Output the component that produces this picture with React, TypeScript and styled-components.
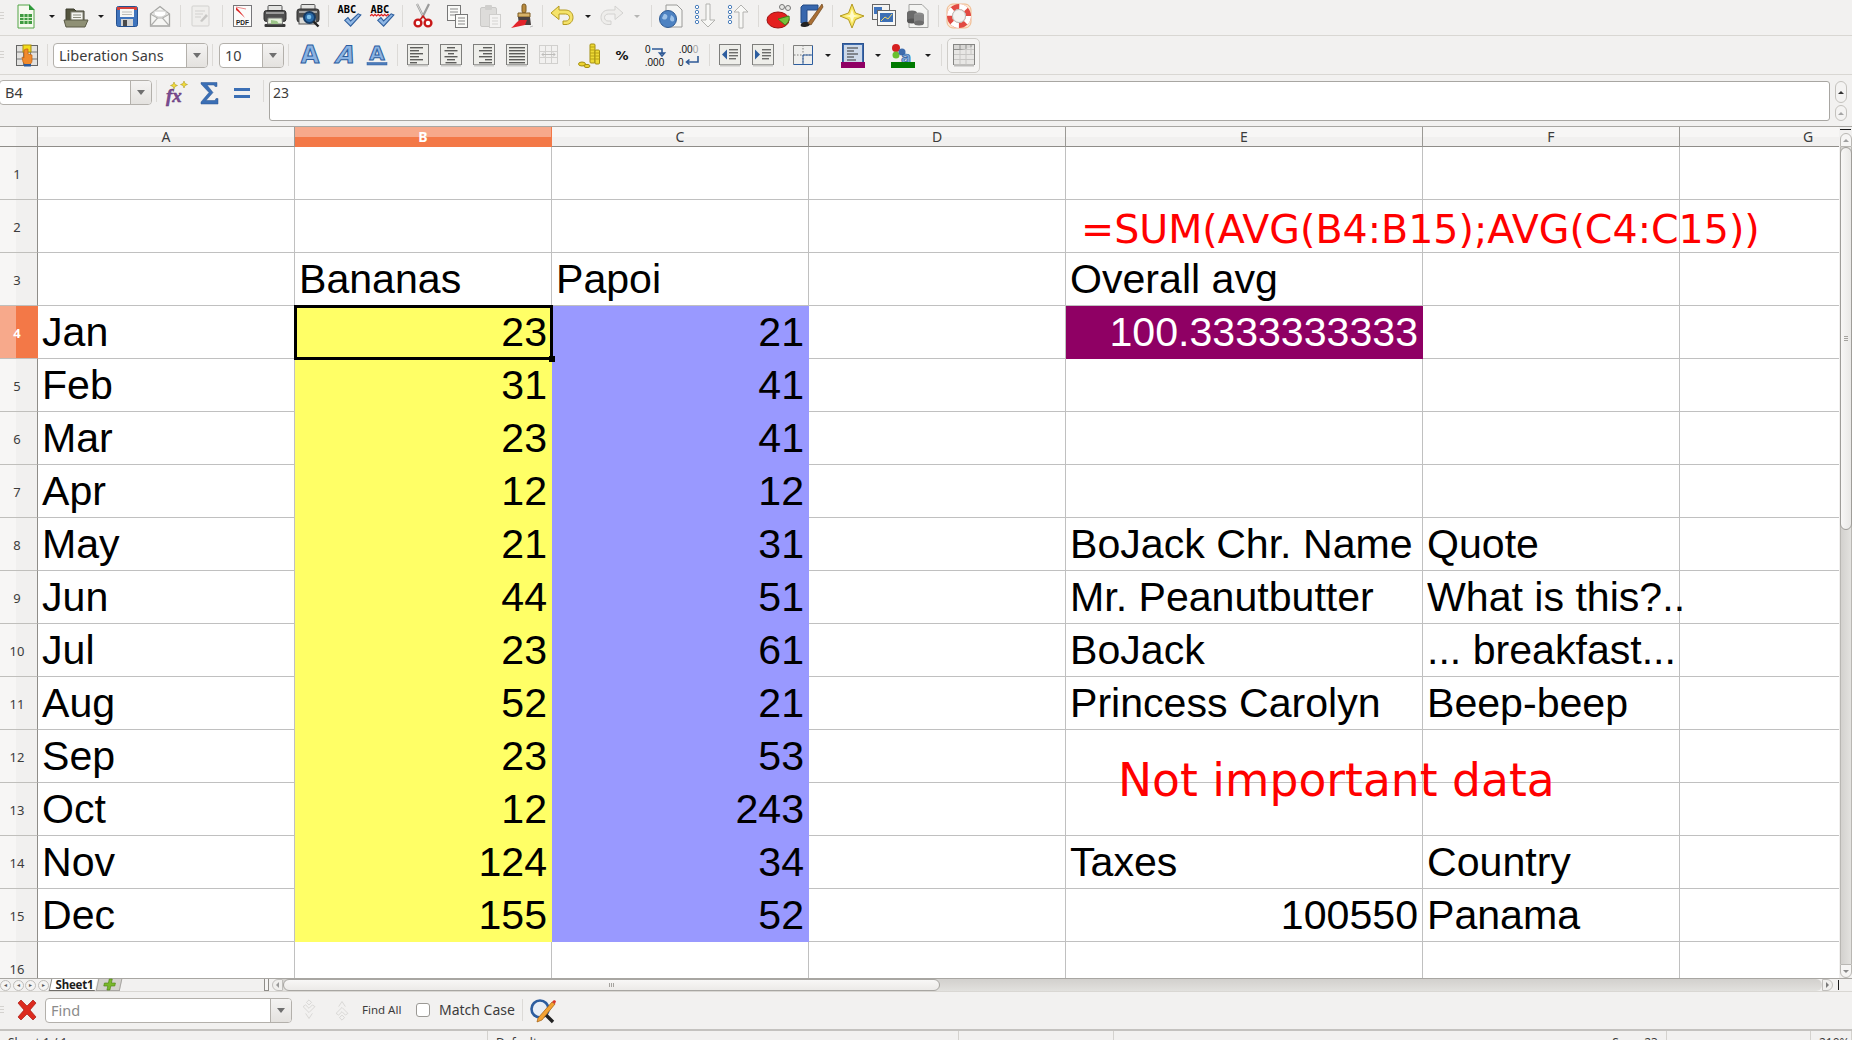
import React from "react";
import styled, { createGlobalStyle } from "styled-components";

const UI_FONT = `"Noto Sans", "Open Sans", sans-serif`;

const Global = createGlobalStyle`
  html, body { margin: 0; padding: 0; height: 100%; overflow: hidden; background: #f2f1f0; }
  #root { height: 100%; }
`;

const Page = styled.div`
  height: 100vh;
  display: flex;
  flex-direction: column;
  overflow: hidden;
  background: #f2f1f0;
  font-family: ${UI_FONT};
  color: #3c3c3c;
`;

const Toolbar = styled.div<{ $h: number; $pb?: number }>`
  flex: none;
  box-sizing: border-box;
  height: ${(p) => p.$h}px;
  padding-bottom: ${(p) => p.$pb ?? 0}px;
  display: flex;
  align-items: center;
  border-bottom: 1px solid #d9d7d3;
`;

const Grip = styled.div`
  flex: none;
  width: 11px;
  height: 8px;
  box-sizing: border-box;
  padding-right: 7px;
  background: repeating-linear-gradient(180deg, #d4d2cf 0 1px, transparent 1px 3px);
  background-clip: content-box;
`;

const Tool = styled.div<{ $w: number; $active?: boolean }>`
  flex: none;
  width: ${(p) => p.$w}px;
  display: flex;
  align-items: center;
  justify-content: center;
  ${(p) =>
    p.$active &&
    `height: 35px; box-sizing: border-box; margin-left: 2px;
     border: 1px solid #cfcdc9; border-radius: 5px; background: #f5f4f3;`}
`;

const Sep = styled.div<{ $w?: number; $h?: number }>`
  flex: none;
  width: ${(p) => p.$w ?? 8}px;
  height: ${(p) => p.$h ?? 22}px;
  background: linear-gradient(#dcdad7, #dcdad7) center / 1px 100% no-repeat;
`;

const Drop = styled.div<{ $w: number; $off?: boolean }>`
  flex: none;
  width: ${(p) => p.$w}px;
  display: flex;
  justify-content: center;
  &::after {
    content: "";
    border-style: solid;
    border-width: 3px 3px 0;
    border-color: ${(p) => (p.$off ? "#b5b5b3" : "#1c1c1c")} transparent transparent;
  }
`;

const Combo = styled.div<{ $w: number; $h?: number; $ml?: number }>`
  flex: none;
  box-sizing: border-box;
  width: ${(p) => p.$w}px;
  height: ${(p) => p.$h ?? 25}px;
  margin-left: ${(p) => p.$ml ?? 0}px;
  display: flex;
  background: #fff;
  border: 1px solid #b3b0ab;
  border-radius: 4px;
  overflow: hidden;
  font-size: 14.5px;
`;

const ComboText = styled.div<{ $muted?: boolean }>`
  flex: 1;
  padding-left: 5px;
  line-height: 23px;
  white-space: nowrap;
  overflow: hidden;
  color: ${(p) => (p.$muted ? "#8b8b8b" : "#3c3c3c")};
`;

const ComboButton = styled.div`
  flex: none;
  width: 20px;
  display: flex;
  align-items: center;
  justify-content: center;
  border-left: 1px solid #b3b0ab;
  background: linear-gradient(#f4f3f2, #e4e2df);
  &::after {
    content: "";
    border-style: solid;
    border-width: 5px 4px 0;
    border-color: #6f6f6f transparent transparent;
  }
`;

const FormulaBar = styled.div`
  flex: none;
  box-sizing: border-box;
  height: 52px;
  padding-top: 5px;
  display: flex;
  align-items: flex-start;
  border-bottom: 1px solid #a8a6a2;
`;

const FormulaTool = styled(Tool)`
  height: 25px;
`;

const FormulaInput = styled.div`
  flex: none;
  box-sizing: border-box;
  width: 1561px;
  height: 40px;
  margin-top: 1px;
  padding: 0 3px;
  background: #fff;
  border: 1px solid #a8a6a2;
  border-radius: 3px;
  font-size: 14px;
  line-height: 22px;
`;

const SpinColumn = styled.div`
  flex: none;
  margin: 1px 0 0 5px;
  display: flex;
  flex-direction: column;
  gap: 2px;
`;

const SpinButton = styled.div<{ $h: number; $off?: boolean }>`
  box-sizing: border-box;
  width: 12px;
  height: ${(p) => p.$h}px;
  display: flex;
  align-items: center;
  justify-content: center;
  border: 1px solid #c4c2be;
  border-radius: 6px;
  background: #f4f3f2;
  &::after {
    content: "";
    border-style: solid;
    border-width: 0 3px 3px;
    border-color: transparent transparent ${(p) => (p.$off ? "#a5a5a5" : "#333")};
  }
`;

const SheetArea = styled.div`
  flex: none;
  height: 851px;
  display: flex;
`;

const Sheet = styled.div`
  position: relative;
  flex: none;
  width: 1839px;
  height: 851px;
  overflow: hidden;
  background: #fff;
  display: grid;
  grid-template-columns: 38px 257px 257px 257px 257px 357px 257px 257px;
  grid-template-rows: 20px;
  grid-auto-rows: 53px;
  font-family: "Liberation Sans", Arial, sans-serif;
  font-size: 41.1px;
  color: #000;
`;

const Corner = styled.div`
  box-sizing: border-box;
  background: linear-gradient(90deg, #f7f6f5 16px, #f1f0ef 16px);
  border-right: 1px solid #8f8d89;
  border-bottom: 1px solid #8f8d89;
`;

const ColHead = styled.div<{ $on?: boolean }>`
  box-sizing: border-box;
  display: flex;
  align-items: center;
  justify-content: center;
  font-family: ${UI_FONT};
  font-size: 14px;
  color: ${(p) => (p.$on ? "#fff" : "#3c3c3c")};
  font-weight: ${(p) => (p.$on ? 700 : 400)};
  background: ${(p) =>
    p.$on
      ? "linear-gradient(#f7a98b 10px, #f37847 10px)"
      : "linear-gradient(#f7f6f5 10px, #f1f0ef 10px)"};
  border-right: 1px solid ${(p) => (p.$on ? "#f37847" : "#9b9995")};
  border-bottom: 1px solid ${(p) => (p.$on ? "#f37847" : "#8f8d89")};
`;

const RowHead = styled.div<{ $on?: boolean }>`
  box-sizing: border-box;
  display: flex;
  align-items: center;
  justify-content: center;
  padding: 2px 3px 0 0;
  font-family: ${UI_FONT};
  font-size: 13px;
  color: ${(p) => (p.$on ? "#fff" : "#3c3c3c")};
  font-weight: ${(p) => (p.$on ? 700 : 400)};
  background: ${(p) =>
    p.$on
      ? "linear-gradient(90deg, #f7a98b 16px, #f37847 16px)"
      : "linear-gradient(90deg, #f7f6f5 16px, #f1f0ef 16px)"};
  border-right: 1px solid ${(p) => (p.$on ? "#f37847" : "#8f8d89")};
  border-bottom: 1px solid #c0bfbc;
`;

const Cell = styled.div<{ $bg?: string; $num?: boolean; $fg?: string; $sel?: boolean }>`
  position: relative;
  box-sizing: border-box;
  min-width: 0;
  padding: 0 4px;
  line-height: 53px;
  white-space: nowrap;
  text-align: ${(p) => (p.$num ? "right" : "left")};
  color: ${(p) => p.$fg ?? "#000"};
  background: ${(p) => p.$bg ?? "transparent"};
  border-right: 1px solid ${(p) => p.$bg ?? "#c0c0c0"};
  border-bottom: 1px solid ${(p) => p.$bg ?? "#c0c0c0"};
  ${(p) =>
    p.$sel &&
    `
    &::before {
      content: "";
      position: absolute;
      inset: -1px -2px -2px -1px;
      border: 3px solid #000;
      z-index: 2;
    }
    &::after {
      content: "";
      position: absolute;
      right: -4px;
      bottom: -4px;
      width: 6px;
      height: 6px;
      background: #000;
      z-index: 3;
    }
  `}
`;

const FloatText = styled.div<{ $x: number; $y: number; $size: number }>`
  position: absolute;
  left: ${(p) => p.$x}px;
  top: ${(p) => p.$y}px;
  font-family: "DejaVu Sans", sans-serif;
  font-size: ${(p) => p.$size}px;
  line-height: 1;
  color: #ff0000;
  white-space: nowrap;
  z-index: 4;
`;

const VScroll = styled.div`
  flex: none;
  width: 13px;
  display: flex;
  flex-direction: column;
  align-items: center;
  background: #f2f1f0;
`;

const ScrollMark = styled.div`
  flex: none;
  width: 11px;
  height: 1px;
  margin: 2px 0 3px;
  background: #1c1c1c;
`;

const VButton = styled.div<{ $down?: boolean }>`
  flex: none;
  box-sizing: border-box;
  width: 12px;
  height: 14px;
  display: flex;
  align-items: center;
  justify-content: center;
  background: #f6f5f4;
  border: 1px solid #b9b7b3;
  border-radius: ${(p) => (p.$down ? "0 0 6px 6px" : "6px 6px 0 0")};
  &::after {
    content: "";
    border-style: solid;
    border-width: ${(p) => (p.$down ? "3px 3px 0" : "0 3px 3px")};
    border-color: ${(p) =>
      p.$down ? "#8a8a8a transparent transparent" : "transparent transparent #a0a0a0"};
  }
`;

const VTrack = styled.div`
  flex: 1;
  box-sizing: border-box;
  width: 12px;
  display: flex;
  flex-direction: column;
  background: linear-gradient(90deg, #d3d1ce, #e3e2df);
  border: 1px solid #b9b7b3;
  border-width: 0 1px;
`;

const VThumb = styled.div`
  flex: none;
  height: 383px;
  margin: 0 -1px;
  box-sizing: border-box;
  display: flex;
  align-items: center;
  justify-content: center;
  background: linear-gradient(90deg, #f8f7f6, #e9e8e6);
  border: 1px solid #9f9d99;
  border-radius: 6px;
  &::after {
    content: "";
    width: 4px;
    height: 5px;
    background: repeating-linear-gradient(180deg, #a5a39f 0 1px, transparent 1px 2px);
  }
`;

const TabBar = styled.div`
  flex: none;
  box-sizing: border-box;
  height: 14px;
  display: flex;
  align-items: stretch;
  border-top: 1px solid #a8a6a2;
  border-bottom: 1px solid #d9d7d3;
`;

const TabNav = styled.div`
  flex: none;
  width: 50px;
  display: flex;
  gap: 1.5px;
  align-items: center;
`;

const TabNavButton = styled.div`
  flex: none;
  box-sizing: border-box;
  width: 11px;
  height: 11px;
  border: 1px solid #c0bebb;
  border-radius: 50%;
  background: #f5f4f3;
  display: flex;
  align-items: center;
  justify-content: center;
  font-size: 6px;
  line-height: 1;
  color: #5a5a5a;
`;

const SheetTab = styled.div`
  flex: none;
  width: 46px;
  box-sizing: border-box;
  background: #fff;
  font-size: 11.5px;
  font-weight: 700;
  line-height: 12px;
  text-align: center;
  letter-spacing: -0.2px;
  color: #1c1c1c;
  border-left: 1px solid #8f8d89;
  border-bottom: 1px solid #6f6d69;
  transform: skewX(-12deg);
  & > span {
    display: block;
    padding-left: 2px;
    transform: skewX(12deg);
  }
`;

const AddTab = styled.div`
  flex: none;
  width: 22px;
  margin-left: 1px;
  display: flex;
  align-items: center;
  justify-content: center;
  background: #d4d2ce;
  border: 1px solid #a8a6a2;
  border-width: 0 1px 1px;
  transform: skewX(-12deg);
`;

const TabFill = styled.div`
  flex: none;
  width: 143px;
`;

const SplitHandle = styled.div`
  flex: none;
  width: 5px;
  box-sizing: border-box;
  background: #f6f5f4;
  border: 1px solid #8f8d89;
  border-width: 0 1px 1px;
`;

const HScroll = styled.div`
  flex: none;
  width: 1567px;
  margin-left: 3px;
  display: flex;
  align-items: stretch;
`;

const HEnd = styled.div<{ $right?: boolean }>`
  flex: none;
  box-sizing: border-box;
  width: 11px;
  display: flex;
  align-items: center;
  justify-content: center;
  background: #f0efed;
  border: 1px solid #c0bebb;
  border-radius: ${(p) => (p.$right ? "0 6px 6px 0" : "6px 0 0 6px")};
  &::after {
    content: "";
    border-style: solid;
    border-width: ${(p) => (p.$right ? "3px 0 3px 3px" : "3px 3px 3px 0")};
    border-color: ${(p) =>
      p.$right
        ? "transparent transparent transparent #7a7a7a"
        : "transparent #9a9a9a transparent transparent"};
  }
`;

const HTrack = styled.div`
  flex: 1;
  display: flex;
  background: linear-gradient(#d2d0cd, #e2e1de);
  border-radius: 0 6px 6px 0;
`;

const HThumb = styled.div`
  flex: none;
  width: 657px;
  box-sizing: border-box;
  display: flex;
  align-items: center;
  justify-content: center;
  background: linear-gradient(#f8f7f6, #eceae8);
  border: 1px solid #a8a6a2;
  border-radius: 6px;
  &::after {
    content: "";
    width: 6px;
    height: 4px;
    background: repeating-linear-gradient(90deg, #a5a39f 0 1px, transparent 1px 2px);
  }
`;

const EndMark = styled.div`
  flex: none;
  width: 1px;
  margin: 1px 0 1px 5px;
  background: #1c1c1c;
`;

const FindBar = styled.div`
  flex: none;
  box-sizing: border-box;
  height: 39px;
  padding-bottom: 1px;
  display: flex;
  align-items: center;
  border-bottom: 2px solid #c4c2bf;
`;

const FindLabel = styled.div<{ $ml: number; $w: number; $size: number }>`
  flex: none;
  width: ${(p) => p.$w}px;
  margin-left: ${(p) => p.$ml}px;
  font-size: ${(p) => p.$size}px;
  line-height: 20px;
  white-space: nowrap;
`;

const Check = styled.div`
  flex: none;
  box-sizing: border-box;
  width: 14px;
  height: 14px;
  margin-left: 13px;
  background: #fff;
  border: 1px solid #9b9995;
  border-radius: 3px;
`;

const StatusBar = styled.div`
  flex: 1;
  display: flex;
  font-size: 12px;
  line-height: 18px;
  white-space: nowrap;
`;

const StatusCell = styled.div<{ $w: number; $flex?: boolean }>`
  flex: none;
  box-sizing: border-box;
  width: ${(p) => p.$w}px;
  height: 20px;
  padding: 3px 0 0 8px;
  border-right: 1px solid #d4d2ce;
  display: flex;
  ${(p) => p.$flex && "justify-content: flex-end; padding-right: 8px;"}
`;

/* ---- toolbar drawings ---- */

const Svg = styled.svg`
  display: block;
  flex: none;
  overflow: visible;
`;

const Ico: React.FC<React.SVGProps<SVGSVGElement> & { s?: number }> = ({ s = 26, children }) => (
  <Svg width={s} height={s} viewBox="0 0 26 26">
    {children}
  </Svg>
);

const NewSheetIcon = () => (
  <Ico>
    <path d="M5 2h11l5 5v18H5z" fill="#f6f9ef" stroke="#52a447" />
    <path d="M16 1l6 6h-6z" fill="#2f9a3a" />
    <rect x="7" y="11" width="12" height="10" fill="#3f9a41" />
    <path d="M7 14.5h12M7 17.5h12M11 11v10M15 11v10" stroke="#d7efc9" />
  </Ico>
);

const OpenIcon = () => (
  <Ico>
    <path d="M3 8V6h8l2 2h8v12H3z" fill="#54553f" stroke="#3c3d2e" />
    <rect x="8" y="9" width="12" height="9" fill="#f4f4f0" stroke="#85867a" />
    <path d="M10 12h8M10 14.5h8" stroke="#8a8b7e" />
    <path d="M1 17h24l-3 7H3z" fill="#8f9075" stroke="#5a5b47" />
  </Ico>
);

const SaveIcon = () => (
  <Ico>
    <rect x="2.5" y="3.5" width="21" height="20" rx="2" fill="#3f74bd" stroke="#24508f" />
    <rect x="3" y="4" width="20" height="3" fill="#d8413a" />
    <rect x="6" y="6" width="14" height="8" fill="#f6f6f4" />
    <path d="M8 9h10M8 11.5h10" stroke="#bcbcb8" />
    <rect x="7" y="16" width="12" height="7" fill="#d3d4d4" />
    <rect x="9" y="17" width="4" height="6" fill="#4a4a4a" />
  </Ico>
);

const MailIcon = () => (
  <Ico>
    <path d="M3.5 11L13 3.5 22.5 11v12h-19z" fill="#f6f6f4" stroke="#a5a5a3" strokeWidth="1.3" />
    <path d="M3.5 23l7-8h5l7 8M3.5 11l7 4M22.5 11l-7 4" fill="none" stroke="#b0b0ae" strokeWidth="1.2" />
    <path d="M7 12V8h12v4l-4 2h-4z" fill="#fff" stroke="#c8c8c6" />
  </Ico>
);

const EditIcon = () => (
  <Ico>
    <rect x="5" y="3" width="17" height="20" rx="1" fill="#efeeec" stroke="#d2d1cf" />
    <path d="M8 8h10M8 11h8M8 14h6" stroke="#d2d1cf" />
    <path d="M13 18l6-7 2 2-6 6z" fill="#c8c7c5" />
  </Ico>
);

const PdfIcon = () => (
  <Ico>
    <rect x="4.5" y="2.5" width="18" height="21" fill="#fbfbfa" stroke="#77777a" />
    <path d="M7 4c4 4 7 8 9 11-3-3-6-6-9-8z" fill="#df2a2a" />
    <path d="M7 4l10 2" stroke="#eb8d8d" />
    <text x="13.5" y="22" textAnchor="middle" fontFamily="Liberation Sans, sans-serif" fontWeight="700" fontSize="6.5" fill="#222">
      PDF
    </text>
  </Ico>
);

const PrintIcon = () => (
  <Ico>
    <rect x="6" y="2.5" width="14" height="7" rx="1" fill="#e4e4e2" stroke="#555" />
    <rect x="2" y="7.5" width="22" height="11" rx="2.5" fill="#4f4f4f" stroke="#2e2e2e" />
    <rect x="4" y="9" width="18" height="2" fill="#9b9b9b" />
    <rect x="2.5" y="21" width="21" height="3" rx="1" fill="#383838" />
    <path d="M6 15h14l.6 6H5.4z" fill="#e6f0dc" stroke="#777" />
    <path d="M9 17l6 1 2 3H9z" fill="#9dc58a" />
  </Ico>
);

const PreviewIcon = () => (
  <Ico>
    <rect x="6" y="1.5" width="14" height="6" rx="1" fill="#e4e4e2" stroke="#555" />
    <rect x="2" y="6" width="22" height="13" rx="2.5" fill="#505050" stroke="#2e2e2e" />
    <rect x="4" y="8" width="18" height="2" fill="#a5a5a5" />
    <rect x="4" y="14" width="17" height="7" fill="#dbdbd8" stroke="#555" />
    <circle cx="14.5" cy="14.5" r="5.5" fill="#2a6aa8" stroke="#173b63" strokeWidth="2" />
    <circle cx="14" cy="14" r="2.3" fill="#7cc0ea" />
    <path d="M18.5 18.5l5 5" stroke="#222" strokeWidth="2.4" />
  </Ico>
);

const SpellIcon: React.FC<{ wavy?: boolean }> = ({ wavy }) => (
  <Ico s={28}>
    <text x="11" y="10.5" textAnchor="middle" fontFamily="DejaVu Sans Mono, monospace" fontWeight="700" fontSize="9.6" fill="#000">
      ABC
    </text>
    {wavy && <path d="M2 13l1.5-1.5 1.5 1.5 1.5-1.5 1.5 1.5 1.5-1.5 1.5 1.5 1.5-1.5 1.5 1.5 1.5-1.5 1.5 1.5 1.5-1.5 1.5 1.5" fill="none" stroke="#e02020" />}
    <path d="M9 17l3-2.5 2.5 3 7-6.5 2.5 1-9.5 10.5z" fill="#8eb6e4" stroke="#2f5f9e" />
  </Ico>
);

const ScissorsIcon = () => (
  <Ico>
    <path d="M7 1l7 14M19 1l-7 14" stroke="#9b9b9b" strokeWidth="2.2" />
    <path d="M7 1l6 12" stroke="#d8d8d6" />
    <circle cx="8" cy="20" r="3.4" fill="#fff" stroke="#c81818" strokeWidth="2.4" />
    <circle cx="18" cy="20" r="3.4" fill="#fff" stroke="#c81818" strokeWidth="2.4" />
    <path d="M10 17l3-4 3 4" fill="none" stroke="#c81818" strokeWidth="1.6" />
  </Ico>
);

const CopyIcon = () => (
  <Ico>
    <rect x="3.5" y="2.5" width="13" height="15" fill="#fafaf8" stroke="#777" />
    <path d="M6 6h8M6 9h8M6 12h8" stroke="#888" />
    <rect x="11.5" y="11.5" width="12" height="13" fill="#fafaf8" stroke="#777" />
    <path d="M14 15h7M14 18h7M14 21h7" stroke="#888" />
  </Ico>
);

const PasteIcon = () => (
  <Ico>
    <rect x="3.5" y="4.5" width="16" height="19" rx="1.5" fill="#dddcda" stroke="#c9c8c6" />
    <rect x="8" y="2" width="7" height="5" rx="1" fill="#d0cfcd" />
    <rect x="12.5" y="11.5" width="11" height="13" fill="#f4f3f2" stroke="#cfcecc" />
    <path d="M15 15h6M15 18h6M15 21h6" stroke="#d4d3d1" />
  </Ico>
);

const BrushIcon = () => (
  <Ico>
    <rect x="12" y="1" width="4" height="9" rx="2" fill="#b98b3e" stroke="#7c5a21" />
    <path d="M8 10h12v4H8z" fill="#d7b36a" stroke="#7c5a21" />
    <path d="M8 14h12l1 8H9z" fill="#4a4140" />
    <path d="M1 25c3-2 5-6 9-8h7l-2 5z" fill="#e3242b" />
    <path d="M20 24l3-1" stroke="#bbb" />
  </Ico>
);

const UndoIcon: React.FC<{ off?: boolean }> = ({ off }) => (
  <Ico>
    <path
      d="M2 10l8-7v4h6c6 0 8 4 8 7.5 0 4-3 7-7 7h-3v-3.5h3c2 0 3.5-1.5 3.5-3.5S19 11 16.5 11H10v5.5z"
      fill={off ? "#eeedeb" : "#f5e36b"}
      stroke={off ? "#d3d2d0" : "#b59a20"}
      transform={off ? "translate(26 0) scale(-1 1)" : undefined}
    />
  </Ico>
);

const WebIcon = () => (
  <Ico>
    <path d="M8 2h11l5 5v17H8z" fill="#f5f5f3" stroke="#9a9a98" />
    <circle cx="10" cy="16" r="8.5" fill="#4d82c2" stroke="#2f5b94" />
    <path d="M6 11c3 0 4 2 3 4s-4 2-5 0M13 12c2 1 4 3 3 6-2 1-4 0-4-2z" fill="#9cc1e8" />
  </Ico>
);

const SortIcon: React.FC<{ up?: boolean }> = ({ up }) => (
  <Ico>
    {[3, 8, 13, 18].map((y) => (
      <circle key={y} cx="6" cy={y + 1} r="1.7" fill="#fff" stroke="#4a7fbd" />
    ))}
    <path
      d={up ? "M16 25V9h-5l7-7 7 7h-5v16z" : "M16 1v16h-5l7 7 7-7h-5V1z"}
      transform="translate(-1 0)"
      fill="#f8f8f6"
      stroke="#b2b2af"
    />
  </Ico>
);

const ChartIcon = () => (
  <Ico>
    <ellipse cx="12" cy="17" rx="11" ry="8" fill="#e4201f" stroke="#9c1313" />
    <path d="M12 16l11-3c1 4-1 7-4 9z" fill="#77c23a" stroke="#3f7f19" />
    <circle cx="16" cy="4" r="2.5" fill="#e8e8e6" stroke="#777" />
    <circle cx="22" cy="5" r="2.5" fill="#e8e8e6" stroke="#777" />
  </Ico>
);

const DrawIcon = () => (
  <Ico>
    <path d="M5 2h15v5H9v13H3V4z" fill="#3767ad" stroke="#224a85" />
    <path d="M3 21c3-3 7-3 9 0 0 2-3 3-6 3s-4-1-3-3z" fill="#222" />
    <path d="M10 20L24 1l1 3-12 18z" fill="#a96f35" stroke="#6e4519" strokeWidth=".7" />
  </Ico>
);

const StarIcon = () => (
  <Ico>
    <path d="M13 1l3.5 9L25 13l-8.5 3.5L13 25l-3.5-8.5L1 13l8.5-3z" fill="#f8e761" stroke="#b49a22" />
    <path d="M13 6l2 6 6 1-6 1-2 6-2-6-6-1 6-1z" fill="#fffbc8" />
  </Ico>
);

const NavigatorIcon = () => (
  <Ico>
    <rect x="1.5" y="1.5" width="17" height="15" fill="#f3f3f1" stroke="#666" />
    <rect x="3" y="4" width="8" height="7" fill="#3f74bd" />
    <rect x="6.5" y="7.5" width="18" height="15" fill="#f8f8f6" stroke="#666" />
    <rect x="9" y="10" width="13" height="9" fill="#3d6fb4" />
    <path d="M10 18l4-4 3 2 4-5" fill="none" stroke="#f0d468" />
  </Ico>
);

const DataIcon = () => (
  <Ico>
    <path d="M5 1.5h13l6 6v17H5z" fill="#f4f4f2" stroke="#a2a2a0" />
    <ellipse cx="8" cy="10" rx="5" ry="2.5" fill="#6a6a6a" />
    <rect x="3" y="10" width="10" height="8" fill="#6a6a6a" />
    <ellipse cx="8" cy="18" rx="5" ry="2.5" fill="#555" />
    <ellipse cx="15" cy="12" rx="5" ry="2.5" fill="#8b8b8b" />
    <rect x="10" y="12" width="10" height="8" fill="#858585" />
    <ellipse cx="15" cy="20" rx="5" ry="2.5" fill="#6d6d6d" />
  </Ico>
);

const HelpIcon = () => (
  <Ico>
    <rect x="1" y="1" width="24" height="24" rx="6" fill="#fbe6d0" stroke="#f0b98c" />
    <circle cx="13" cy="13" r="9.5" fill="none" stroke="#e24a42" strokeWidth="5" />
    <circle cx="13" cy="13" r="9.5" fill="none" stroke="#fff" strokeWidth="5" strokeDasharray="7.5 7.42" />
    <circle cx="13" cy="13" r="6.5" fill="#f4f3f1" stroke="#b7b7b5" />
  </Ico>
);

const CondIcon = () => (
  <Ico>
    <rect x="2.5" y="3.5" width="21" height="20" fill="#e2e1df" stroke="#666" />
    <path d="M9.5 4v19M16.5 4v19M3 10h20M3 17h20" stroke="#777" />
    <rect x="9" y="3" width="8" height="7" fill="#f4dc1b" stroke="#a98f10" />
    <path d="M12 7h2v5l4 1v6c0 2-2 4-4 4s-4-1-5-3l-1-5 2 1V8z" fill="#f08a2c" stroke="#c25f10" strokeWidth=".7" />
    <rect x="10" y="22" width="7" height="2.5" fill="#2b5a9d" />
  </Ico>
);

const FontIcon: React.FC<{ italic?: boolean; under?: boolean }> = ({ italic, under }) => (
  <Ico>
    <text
      x={italic ? "8" : "13"}
      y={under ? "18" : "21"}
      textAnchor="middle"
      fontFamily="DejaVu Sans, sans-serif"
      fontWeight="700"
      fontSize={under ? "20" : "24"}
      fill="#8bb3e2"
      stroke="#2c5d9f"
      strokeWidth="1"
      transform={italic ? "skewX(-18) translate(11 0)" : undefined}
    >
      A
    </text>
    {under && <rect x="3" y="20.5" width="20" height="2.5" fill="#4c7cbb" stroke="#2c5d9f" strokeWidth=".5" />}
  </Ico>
);

const LINES = {
  left: [13, 9, 13, 9, 13, 7],
  center: [8, 13, 6, 13, 8, 11],
  right: [9, 13, 9, 13, 7, 13],
  full: [16, 16, 16, 16, 16, 16],
};

const AlignIcon: React.FC<{ kind: keyof typeof LINES }> = ({ kind }) => (
  <Ico>
    <rect x="2.5" y="2.5" width="21" height="20" fill="#eeeeea" stroke="#7e7e7c" />
    <path d="M3 23.5h20" stroke="#c9c8c6" strokeWidth="2" />
    {LINES[kind].map((w, i) => {
      const x = kind === "left" || kind === "full" ? 5 : kind === "right" ? 21 - w : 13 - w / 2;
      return <rect key={i} x={x} y={5 + i * 3} width={w} height="1.4" fill="#5d5d5b" />;
    })}
  </Ico>
);

const MergeIcon = () => (
  <Ico>
    <rect x="3.5" y="3.5" width="18" height="18" fill="#f2f1f0" stroke="#d1d0ce" />
    <path d="M3.5 9.5h18M3.5 15.5h18M9.5 3.5v18M15.5 3.5v18" stroke="#d1d0ce" />
    <path d="M6 12.5h13M8 10.5l-2 2 2 2M17 10.5l2 2-2 2" fill="none" stroke="#bdbcba" />
  </Ico>
);

const CoinsIcon = () => (
  <Ico>
    <ellipse cx="5" cy="22" rx="3.5" ry="2" fill="#ecd332" stroke="#a38e12" />
    <ellipse cx="10" cy="24" rx="3" ry="1.6" fill="#ecd332" stroke="#a38e12" />
    <rect x="13" y="2" width="5" height="19" rx="1" fill="#eeda35" stroke="#a38e12" />
    <path d="M13 5h5M13 8h5M13 11h5M13 14h5M13 17h5" stroke="#b8a116" />
    <rect x="18" y="8" width="4.5" height="14" rx="1" fill="#eeda35" stroke="#a38e12" />
    <path d="M18 11h4.5M18 14h4.5M18 17h4.5" stroke="#b8a116" />
  </Ico>
);

const PercentIcon = () => (
  <Ico>
    <text x="13" y="18" textAnchor="middle" fontFamily="DejaVu Sans, sans-serif" fontWeight="700" fontSize="13" fill="#111">
      %
    </text>
  </Ico>
);

const ThousandIcon = () => (
  <Ico>
    <text x="4" y="11" fontFamily="Liberation Sans, sans-serif" fontSize="10" fill="#111">
      0
    </text>
    <text x="13.5" y="24" textAnchor="middle" fontFamily="Liberation Sans, sans-serif" fontSize="10" fill="#111">
      .000
    </text>
    <path d="M11 7h10v5M18.5 11l2.5 3 2.5-3z" fill="none" stroke="#2f5a96" strokeWidth="1.6" />
  </Ico>
);

const DecimalIcon = () => (
  <Ico>
    <text x="13.5" y="11" textAnchor="middle" fontFamily="Liberation Sans, sans-serif" fontSize="10" fill="#111">
      .00
      <tspan fill="#a5a5a5">0</tspan>
    </text>
    <text x="3" y="24" fontFamily="Liberation Sans, sans-serif" fontSize="10" fill="#111">
      0
    </text>
    <path d="M23 14v6H12M14.5 17.5l-3 2.5 3 2.5" fill="none" stroke="#2f5a96" strokeWidth="1.6" />
  </Ico>
);

const IndentIcon: React.FC<{ out?: boolean }> = ({ out }) => (
  <Ico>
    <rect x="2.5" y="2.5" width="21" height="20" fill="#eeeeea" stroke="#7e7e7c" />
    <path d="M3 23.5h20" stroke="#c9c8c6" strokeWidth="2" />
    <path d={out ? "M10 7.5v10l-5-5z" : "M5 7.5v10l5-5z"} fill="#2c5d9f" />
    {[8, 11, 14, 17].map((y) => (
      <rect key={y} x="12" y={y - 1} width={y === 17 ? 7 : 9} height="1.4" fill="#6d6d6b" />
    ))}
  </Ico>
);

const BorderIcon = () => (
  <Ico>
    <rect x="3.5" y="3.5" width="19" height="19" fill="#eeeeec" />
    <path d="M3.5 22.5V3.5h19" fill="none" stroke="#7e7e7c" />
    <path d="M3.5 22.5h19v-19" fill="none" stroke="#2c5d9f" />
    <path d="M13 3v8M4 13h18M13 13v9" stroke="#7e7e7c" strokeDasharray="1.5 1.5" />
    <path d="M13 13h9.5M13 13v9.5" stroke="#2c5d9f" />
  </Ico>
);

const BgIcon = () => (
  <Ico>
    <rect x="2.5" y="1.5" width="21" height="20" fill="#3e6cae" stroke="#2c5390" />
    <rect x="4" y="3" width="18" height="17" fill="#cdd9e9" />
    <path d="M7 6h11M7 9h7M7 12h11M7 15h7M7 18h9" stroke="#333" strokeWidth="1.2" />
    <rect x="1" y="20" width="24" height="6" fill="#8f0064" />
  </Ico>
);

const TextColorIcon = () => (
  <Ico>
    <circle cx="6" cy="6" r="4" fill="#d62020" />
    <circle cx="6" cy="13" r="3.5" fill="#6ac02f" />
    <circle cx="12" cy="10" r="3.5" fill="#3e6cae" />
    <text x="16" y="21" textAnchor="middle" fontFamily="DejaVu Sans, sans-serif" fontWeight="700" fontSize="15" fill="#7da7da" stroke="#2c5d9f" strokeWidth=".7">
      a
    </text>
    <rect x="1" y="20" width="24" height="6" fill="#007a00" />
  </Ico>
);

const GridIcon = () => (
  <Ico>
    <rect x="2.5" y="2.5" width="21" height="20" fill="#d8d7d5" stroke="#858583" />
    <path d="M3 7.5h20M3 12.5h20M3 17.5h20M9 3v20M15 3v20M20 3v10" stroke="#8f8f8d" />
    <path d="M3 23V8h1c8 0 17-2 19-5v20z" fill="#f5f4f3" opacity=".55" />
    <path d="M3 23.5h20" stroke="#bdbcba" strokeWidth="2" />
  </Ico>
);

const FxIcon = () => (
  <Ico>
    <text x="2" y="22" fontFamily="Liberation Serif, serif" fontWeight="700" fontStyle="italic" fontSize="19" fill="#7d4c93" stroke="#5a3370" strokeWidth=".4">
      fx
    </text>
    <path d="M10 2l1 2.5 2.5 1-2.5 1-1 2.5-1-2.5-2.5-1 2.5-1z" fill="#f2dc3a" stroke="#a38e12" strokeWidth=".5" />
    <path d="M20 1l1 2.5 2.5 1-2.5 1-1 2.5-1-2.5-2.5-1 2.5-1z" fill="#f2dc3a" stroke="#a38e12" strokeWidth=".5" />
  </Ico>
);

const SumIcon = () => (
  <Ico>
    <path d="M5 2.5h16v4h-2l-1-1.5H11l6 7.5-7 8h9l1-2h2V24H5v-2l8-9.5L5 4z" fill="#3b6fb5" stroke="#2c5690" strokeWidth=".5" />
  </Ico>
);

const EqualsIcon = () => (
  <Ico>
    <rect x="5" y="8" width="16" height="3" fill="#3b6fb5" />
    <rect x="5" y="15" width="16" height="3" fill="#3b6fb5" />
  </Ico>
);

const CloseFindIcon = () => (
  <Ico>
    <path d="M4 6l3-3 6 6 6-6 3 3-6 7 6 7-3 3-6-6-6 6-3-3 6-7z" fill="#dc2a1e" stroke="#a81a12" strokeWidth=".7" />
  </Ico>
);

const FindArrowIcon: React.FC<{ up?: boolean }> = ({ up }) => (
  <Ico s={22}>
    <g transform={up ? "translate(0 26) scale(1 -1)" : undefined} fill="none" stroke="#d4d3d1">
      <path d="M13 1l3 3-3 3-3-3zM6 9l7 7 7-7-3-2-4 4-4-4z" />
      <path d="M9 17l4 6 4-6" />
    </g>
  </Ico>
);

const FindReplaceIcon = () => (
  <Ico>
    <circle cx="12" cy="12" r="8.5" fill="#e8eef6" stroke="#2c5d9f" strokeWidth="2.6" />
    <path d="M18 18l7 7" stroke="#222" strokeWidth="3.4" />
    <path d="M10 21L24 5l3 2-13 16-5 2z" fill="#f3a233" stroke="#a05c0e" strokeWidth=".7" />
    <path d="M24 5l3 2 1-3-2-1z" fill="#d9362b" />
  </Ico>
);

const PlusIcon = () => (
  <Svg width={11} height={11} viewBox="0 0 11 11">
    <path d="M4 0h3v4h4v3H7v4H4V7H0V4h4z" fill="#79b82b" stroke="#4d8412" strokeWidth=".6" />
  </Svg>
);

/* ---- sheet data ---- */

const COLUMNS = ["A", "B", "C", "D", "E", "F", "G"];
const MONTHS = ["Jan", "Feb", "Mar", "Apr", "May", "Jun", "Jul", "Aug", "Sep", "Oct", "Nov", "Dec"];
const BANANAS = [23, 31, 23, 12, 21, 44, 23, 52, 23, 12, 124, 155];
const PAPOI = [21, 41, 41, 12, 31, 51, 61, 21, 53, 243, 34, 52];

const SIDE: Record<number, [string, string]> = {
  3: ["Overall avg", ""],
  8: ["BoJack Chr. Name", "Quote"],
  9: ["Mr. Peanutbutter", "What is this?.."],
  10: ["BoJack", "... breakfast..."],
  11: ["Princess Carolyn", "Beep-beep"],
  14: ["Taxes", "Country"],
};

const renderRow = (row: number) => {
  const month = row >= 4 && row <= 15 ? row - 4 : -1;
  const side = SIDE[row];
  return (
    <React.Fragment key={row}>
      <RowHead $on={row === 4}>{row}</RowHead>
      <Cell>{month >= 0 ? MONTHS[month] : ""}</Cell>
      {month >= 0 ? (
        <Cell $bg="#ffff66" $num $sel={row === 4}>
          {BANANAS[month]}
        </Cell>
      ) : (
        <Cell>{row === 3 ? "Bananas" : ""}</Cell>
      )}
      {month >= 0 ? (
        <Cell $bg="#9999ff" $num>
          {PAPOI[month]}
        </Cell>
      ) : (
        <Cell>{row === 3 ? "Papoi" : ""}</Cell>
      )}
      <Cell />
      {row === 4 ? (
        <Cell $bg="#8f0064" $fg="#fff" $num>
          100.3333333333
        </Cell>
      ) : row === 15 ? (
        <Cell $num>100550</Cell>
      ) : (
        <Cell>{side ? side[0] : ""}</Cell>
      )}
      <Cell>{row === 15 ? "Panama" : side ? side[1] : ""}</Cell>
      <Cell />
    </React.Fragment>
  );
};

const ROWS = Array.from({ length: 16 }, (_, i) => i + 1);

const App: React.FC = () => (
  <Page>
    <Global />
    <Toolbar $h={36} $pb={3}>
      <Grip />
      <Tool $w={30}><NewSheetIcon /></Tool>
      <Drop $w={21} />
      <Tool $w={28}><OpenIcon /></Tool>
      <Drop $w={22} />
      <Tool $w={30}><SaveIcon /></Tool>
      <Tool $w={36}><MailIcon /></Tool>
      <Sep $w={4} />
      <Tool $w={36}><EditIcon /></Tool>
      <Sep />
      <Tool $w={32}><PdfIcon /></Tool>
      <Tool $w={34}><PrintIcon /></Tool>
      <Tool $w={32}><PreviewIcon /></Tool>
      <Sep />
      <Tool $w={33}><SpellIcon /></Tool>
      <Tool $w={34}><SpellIcon wavy /></Tool>
      <Sep $w={6} />
      <Tool $w={35}><ScissorsIcon /></Tool>
      <Tool $w={33}><CopyIcon /></Tool>
      <Tool $w={34}><PasteIcon /></Tool>
      <Tool $w={31}><BrushIcon /></Tool>
      <Sep />
      <Tool $w={32}><UndoIcon /></Tool>
      <Drop $w={20} />
      <Tool $w={28}><UndoIcon off /></Tool>
      <Drop $w={22} $off />
      <Sep $w={6} />
      <Tool $w={33}><WebIcon /></Tool>
      <Tool $w={34}><SortIcon /></Tool>
      <Tool $w={32}><SortIcon up /></Tool>
      <Sep $w={10} />
      <Tool $w={31}><ChartIcon /></Tool>
      <Tool $w={34}><DrawIcon /></Tool>
      <Sep />
      <Tool $w={32}><StarIcon /></Tool>
      <Tool $w={32}><NavigatorIcon /></Tool>
      <Tool $w={34}><DataIcon /></Tool>
      <Sep />
      <Tool $w={34}><HelpIcon /></Tool>
    </Toolbar>

    <Toolbar $h={39}>
      <Grip />
      <Tool $w={32}><CondIcon /></Tool>
      <Sep />
      <Combo $w={155} $ml={2}>
        <ComboText>Liberation Sans</ComboText>
        <ComboButton />
      </Combo>
      <Sep />
      <Combo $w={65} $ml={3}>
        <ComboText>10</ComboText>
        <ComboButton />
      </Combo>
      <Sep $w={9} />
      <Tool $w={34}><FontIcon /></Tool>
      <Tool $w={33}><FontIcon italic /></Tool>
      <Tool $w={33}><FontIcon under /></Tool>
      <Sep />
      <Tool $w={33}><AlignIcon kind="left" /></Tool>
      <Tool $w={33}><AlignIcon kind="center" /></Tool>
      <Tool $w={33}><AlignIcon kind="right" /></Tool>
      <Tool $w={33}><AlignIcon kind="full" /></Tool>
      <Tool $w={32}><MergeIcon /></Tool>
      <Sep />
      <Tool $w={33}><CoinsIcon /></Tool>
      <Tool $w={32}><PercentIcon /></Tool>
      <Tool $w={32}><ThousandIcon /></Tool>
      <Tool $w={35}><DecimalIcon /></Tool>
      <Sep />
      <Tool $w={34}><IndentIcon out /></Tool>
      <Tool $w={32}><IndentIcon /></Tool>
      <Sep />
      <Tool $w={32}><BorderIcon /></Tool>
      <Drop $w={18} />
      <Tool $w={32}><BgIcon /></Tool>
      <Drop $w={18} />
      <Tool $w={32}><TextColorIcon /></Tool>
      <Drop $w={18} />
      <Sep />
      <Tool $w={33} $active><GridIcon /></Tool>
    </Toolbar>

    <FormulaBar>
      <Combo $w={153} $ml={-1}>
        <ComboText>B4</ComboText>
        <ComboButton />
      </Combo>
      <Sep $w={9} />
      <FormulaTool $w={31}><FxIcon /></FormulaTool>
      <FormulaTool $w={33}><SumIcon /></FormulaTool>
      <FormulaTool $w={33}><EqualsIcon /></FormulaTool>
      <Sep $w={11} />
      <FormulaInput>23</FormulaInput>
      <SpinColumn>
        <SpinButton $h={22} />
        <SpinButton $h={16} $off />
      </SpinColumn>
    </FormulaBar>

    <SheetArea>
      <Sheet>
        <Corner />
        {COLUMNS.map((c) => (
          <ColHead key={c} $on={c === "B"}>
            {c}
          </ColHead>
        ))}
        {ROWS.map(renderRow)}
        <FloatText $x={1081} $y={83} $size={39.55}>
          =SUM(AVG(B4:B15);AVG(C4:C15))
        </FloatText>
        <FloatText $x={1118} $y={631} $size={45.6}>
          Not important data
        </FloatText>
      </Sheet>
      <VScroll>
        <ScrollMark />
        <VButton />
        <VTrack>
          <VThumb />
        </VTrack>
        <VButton $down />
      </VScroll>
    </SheetArea>

    <TabBar>
      <TabNav>
        <TabNavButton>◂</TabNavButton>
        <TabNavButton>◂</TabNavButton>
        <TabNavButton>▸</TabNavButton>
        <TabNavButton>▸</TabNavButton>
      </TabNav>
      <SheetTab>
        <span>Sheet1</span>
      </SheetTab>
      <AddTab>
        <PlusIcon />
      </AddTab>
      <TabFill />
      <SplitHandle />
      <HScroll>
        <HEnd />
        <HTrack>
          <HThumb />
        </HTrack>
        <HEnd $right />
        <EndMark />
      </HScroll>
    </TabBar>

    <FindBar>
      <Grip />
      <Tool $w={32}><CloseFindIcon /></Tool>
      <Combo $w={247} $ml={2}>
        <ComboText $muted>Find</ComboText>
        <ComboButton />
      </Combo>
      <Tool $w={34}><FindArrowIcon /></Tool>
      <Tool $w={32}><FindArrowIcon up /></Tool>
      <FindLabel $ml={4} $w={41} $size={11.5}>Find All</FindLabel>
      <Check />
      <FindLabel $ml={9} $w={78} $size={14}>Match Case</FindLabel>
      <Sep $w={11} />
      <Tool $w={25}><FindReplaceIcon /></Tool>
    </FindBar>

    <StatusBar>
      <StatusCell $w={488}>Sheet 1 / 1</StatusCell>
      <StatusCell $w={471}>Default</StatusCell>
      <StatusCell $w={155} />
      <StatusCell $w={553} $flex>Sum=23</StatusCell>
      <StatusCell $w={144} />
      <StatusCell $w={41}>210%</StatusCell>
    </StatusBar>
  </Page>
);

export default App;
